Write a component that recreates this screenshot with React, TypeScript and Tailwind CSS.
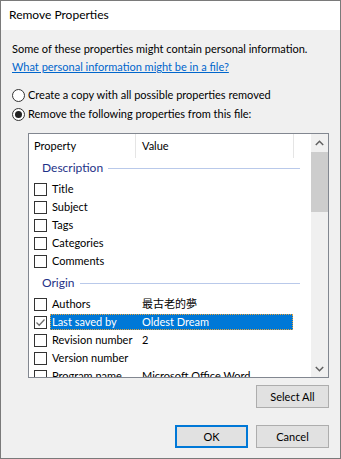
import type { ReactNode } from 'react';

const FONT = "font-['Lato','Noto_Sans_CJK_TC',sans-serif]";

type Row = { label: string; value?: ReactNode; checked?: boolean; selected?: boolean };

const DESCRIPTION: Row[] = [
  { label: 'Title' },
  { label: 'Subject' },
  { label: 'Tags' },
  { label: 'Categories' },
  { label: 'Comments' },
];

const ORIGIN: Row[] = [
  { label: 'Authors', value: '最古老的夢' },
  { label: 'Last saved by', value: 'Oldest Dream', checked: true, selected: true },
  { label: 'Revision number', value: '2' },
  { label: 'Version number' },
  { label: 'Program name', value: 'Microsoft Office Word' },
];

function Radio({ on, children }: { on?: boolean; children: ReactNode }) {
  return (
    <div className="flex h-[18px] items-center">
      <span className="flex h-[13px] w-[13px] items-center justify-center rounded-full border border-[#333] bg-white">
        {on && <span className="h-[7px] w-[7px] rounded-full bg-[#222]" />}
      </span>
      <span className="ml-[3px] whitespace-nowrap">{children}</span>
    </div>
  );
}

function GroupHeader({ title, first }: { title: string; first?: boolean }) {
  return (
    <div className={`flex h-[22px] shrink-0 items-start pt-px pl-[13px] pr-[11px] ${first ? '' : 'mt-[3px]'}`}>
      <span className="text-[12px] text-[#1e3287]">{title}</span>
      <span className="mt-[9px] ml-[5px] h-px flex-1 bg-[#b9c9ea]" />
    </div>
  );
}

function ListRow({ label, value, checked, selected }: Row) {
  return (
    <div className="flex h-[18px] shrink-0 items-center pl-[5px]">
      <span className="flex h-[13px] w-[13px] shrink-0 items-center justify-center border border-[#333] bg-white">
        {checked && (
          <svg width="11" height="11" viewBox="0 0 11 11">
            <path d="M1.5 5.5 L4.2 8.2 L9.5 2.5" fill="none" stroke="#6d6d6d" strokeWidth="1.3" />
          </svg>
        )}
      </span>
      <div
        className={`ml-[3px] flex h-[16px] w-[243px] items-center ${
          selected ? 'border border-dotted border-[#e8a33a] bg-[#0078d7] text-white' : 'border border-transparent'
        }`}
      >
        <span className="w-[91px] shrink-0 pl-[1px] whitespace-nowrap">{label}</span>
        <span className="whitespace-nowrap">{value}</span>
      </div>
    </div>
  );
}

export default function App() {
  return (
    <div className={`${FONT} flex h-[459px] w-[341px] flex-col border border-[#7a7a7a] text-[11px] leading-[18px] text-black`}>
      {/* Title bar */}
      <div className="flex h-[29px] shrink-0 items-center bg-white pl-[8px] pb-[1px] text-[12px]">Remove Properties</div>

      <div className="flex flex-1 flex-col bg-[#f0f0f0] px-[11px] pt-[10px]">
        <p className="whitespace-nowrap">Some of these properties might contain personal information.</p>
        <a href="#" className="self-start whitespace-nowrap text-[#0066cc] underline">
          What personal information might be in a file?
        </a>

        <div className="mt-[10px] flex flex-col gap-[1px]">
          <Radio>Create a copy with all possible properties removed</Radio>
          <Radio on>Remove the following properties from this file:</Radio>
        </div>

        {/* Property list */}
        <div className="mt-[10px] ml-[16px] flex h-[245px] shrink-0 border border-[#828790] bg-white">
          <div className="flex flex-1 flex-col overflow-hidden">
            <div className="flex h-[24px] shrink-0 items-center">
              <span className="flex h-full w-[107px] items-center border-r border-[#e5e5e5] pl-[5px]">Property</span>
              <span className="flex h-full w-[158px] items-center border-r border-[#e5e5e5] pl-[6px]">Value</span>
            </div>
            <GroupHeader title="Description" first />
            {DESCRIPTION.map((r) => (
              <ListRow key={r.label} {...r} />
            ))}
            <GroupHeader title="Origin" />
            {ORIGIN.map((r) => (
              <ListRow key={r.label} {...r} />
            ))}
          </div>

          {/* Scrollbar */}
          <div className="flex w-[17px] shrink-0 flex-col bg-[#f0f0f0]">
            <div className="flex h-[17px] items-center justify-center">
              <svg width="9" height="6" viewBox="0 0 9 6">
                <path d="M0.8 5 L4.5 1.3 L8.2 5" fill="none" stroke="#606060" strokeWidth="1.5" />
              </svg>
            </div>
            <div className="mt-px h-[60px] bg-[#cdcdcd]" />
            <div className="flex-1" />
            <div className="flex h-[17px] items-center justify-center">
              <svg width="9" height="6" viewBox="0 0 9 6">
                <path d="M0.8 1 L4.5 4.7 L8.2 1" fill="none" stroke="#606060" strokeWidth="1.5" />
              </svg>
            </div>
          </div>
        </div>

        <div className="mt-[7px] flex justify-end">
          <button className="h-[23px] w-[73px] border border-[#adadad] bg-[#e1e1e1]">Select All</button>
        </div>

        <div className="mt-[17px] flex justify-end gap-[8px]">
          <button className="h-[23px] w-[73px] border-2 border-[#0078d7] bg-[#e1e1e1]">OK</button>
          <button className="h-[23px] w-[73px] border border-[#adadad] bg-[#e1e1e1]">Cancel</button>
        </div>
      </div>
    </div>
  );
}
